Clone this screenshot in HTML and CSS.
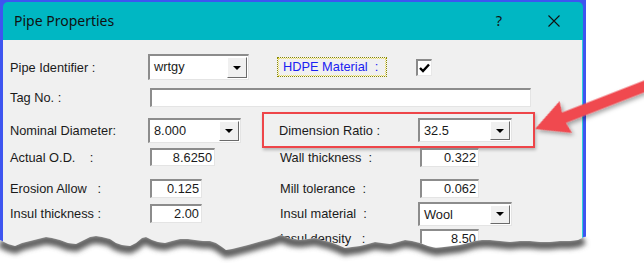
FILE: index.html
```html
<!DOCTYPE html>
<html lang="en">
<head>
    <meta charset="UTF-8">
    <title>Pipe Properties</title>
    <link rel="stylesheet" href="styles.css">
</head>
<body>
    <div class="window">
        <div class="titlebar">
            <span class="title">Pipe Properties</span>
            <span class="help">?</span>
            <svg class="close" width="12" height="12" viewBox="0 0 12 12">
                <path d="M0.5 0.5 L11.5 11.5 M11.5 0.5 L0.5 11.5" stroke="#111" stroke-width="1.1" fill="none"/>
            </svg>
        </div>
        <div class="content">
            <div class="row r1">
                <span class="lbl">Pipe Identifier :</span>
                <div class="combo w-id"><span class="val">wrtgy</span><span class="btn"><i class="tri"></i></span></div>
                <div class="right">
                    <span class="hdpe">HDPE Material&nbsp;&nbsp;:</span>
                    <span class="check">
                        <svg width="11" height="10" viewBox="0 0 11 10"><path d="M1 5 L4 8 L10 1.5" stroke="#000" stroke-width="2.4" fill="none"/></svg>
                    </span>
                </div>
            </div>
            <div class="row r2">
                <span class="lbl">Tag No. :</span>
                <div class="txt w-tag"></div>
            </div>
            <div class="row r3">
                <span class="lbl">Nominal Diameter:</span>
                <div class="combo w-nom"><span class="val">8.000</span><span class="btn"><i class="tri"></i></span></div>
                <div class="right boxed">
                    <span class="rlbl">Dimension Ratio :</span>
                    <div class="combo w-r"><span class="val">32.5</span><span class="btn"><i class="tri"></i></span></div>
                </div>
            </div>
            <div class="row r4">
                <span class="lbl">Actual O.D.&nbsp;&nbsp;&nbsp;&nbsp;:</span>
                <div class="txt num w-od">8.6250</div>
                <div class="right">
                    <span class="rlbl">Wall thickness&nbsp;&nbsp;:</span>
                    <div class="txt num w-rt">0.322</div>
                </div>
            </div>
            <div class="row r5">
                <span class="lbl">Erosion Allow&nbsp;&nbsp;&nbsp;:</span>
                <div class="txt num w-sm">0.125</div>
                <div class="right">
                    <span class="rlbl">Mill tolerance&nbsp;&nbsp;:</span>
                    <div class="txt num w-rt">0.062</div>
                </div>
            </div>
            <div class="row r6">
                <span class="lbl">Insul thickness :</span>
                <div class="txt num w-sm">2.00</div>
                <div class="right">
                    <span class="rlbl">Insul material&nbsp;&nbsp;:</span>
                    <div class="combo w-r"><span class="val">Wool</span><span class="btn"><i class="tri"></i></span></div>
                </div>
            </div>
            <div class="row r7">
                <span class="lbl"></span>
                <span></span>
                <div class="right">
                    <span class="rlbl">Insul density&nbsp;&nbsp;&nbsp;:</span>
                    <div class="txt num w-rt">8.50</div>
                </div>
            </div>
        </div>
    </div>

    <!-- callout arrow -->
    <svg class="arrow" width="644" height="263" viewBox="0 0 644 263">
        <defs>
            <filter id="ash" x="-20%" y="-20%" width="140%" height="160%">
                <feDropShadow dx="1" dy="3" stdDeviation="2" flood-color="#000" flood-opacity="0.35"/>
            </filter>
        </defs>
        <g transform="translate(535 129) rotate(-21.3)" filter="url(#ash)">
            <polygon points="0,0 33,-17 31,-5.5 120,-5.5 120,5.5 31,5.5 33,17" fill="#f0494f"/>
        </g>
    </svg>

    <!-- torn paper edge -->
    <svg class="torn" width="644" height="263" viewBox="0 0 644 263">
        <defs>
            <clipPath id="below">
                <polygon points="0,240 8,244 15,246 22,243 30,241 38,239 46,237 52,238 60,240 68,243 76,244 84,240 90,237 96,236 102,237 110,239 116,243 122,245 130,246 136,243 142,238 146,237 152,240 158,242 165,243 172,241 180,239 188,239 195,240 203,241 210,241 216,243 222,247 226,250 232,249 240,247 248,245 255,243 262,241 270,239 276,237 281,235 286,237 292,239 300,240 308,239 315,238 322,240 330,242 338,245 345,248 352,247 360,246 368,244 375,242 382,243 390,244 398,242 405,240 412,241 420,243 428,246 436,248 444,247 452,246 460,245 468,243 475,241 482,240 490,240 500,241 510,242 520,241 530,241 540,242 550,242 560,241 570,241 578,240 584,237 590,236 644,236 644,263 0,263"/>
            </clipPath>
            <filter id="soft" x="-5%" y="-200%" width="110%" height="500%">
                <feGaussianBlur stdDeviation="2.8"/>
            </filter>
        </defs>
        <rect x="0" y="220" width="644" height="43" fill="#fff" clip-path="url(#below)"/>
        <g clip-path="url(#below)">
            <polyline transform="translate(0 3)" filter="url(#soft)" fill="none" stroke="#5e5e5e" stroke-width="9"
                points="0,240 8,244 15,246 22,243 30,241 38,239 46,237 52,238 60,240 68,243 76,244 84,240 90,237 96,236 102,237 110,239 116,243 122,245 130,246 136,243 142,238 146,237 152,240 158,242 165,243 172,241 180,239 188,239 195,240 203,241 210,241 216,243 222,247 226,250 232,249 240,247 248,245 255,243 262,241 270,239 276,237 281,235 286,237 292,239 300,240 308,239 315,238 322,240 330,242 338,245 345,248 352,247 360,246 368,244 375,242 382,243 390,244 398,242 405,240 412,241 420,243 428,246 436,248 444,247 452,246 460,245 468,243 475,241 482,240 490,240 500,241 510,242 520,241 530,241 540,242 550,242 560,241 570,241 578,240 584,237"/>
        </g>
    </svg>
</body>
</html>
```

FILE: styles.css
```css
body {
    margin: 0;
    background: #fff;
    font-family: "Liberation Sans", Arial, sans-serif;
    font-size: 12.8px;
    color: #1a1a1a;
    width: 644px;
    height: 263px;
    overflow: hidden;
    position: relative;
}
.window {
    width: 580px;
    height: 261px;
    padding: 2px 3px 0 3px;
    background: #3e55f0;
}
.titlebar {
    height: 38px;
    background: #00b7c3;
    border-radius: 5px 5px 0 0;
    display: flex;
    align-items: center;
    font-family: "Noto Sans", "Open Sans", sans-serif;
    color: #111;
}
.title {
    font-size: 14px;
    margin-left: 11px;
    margin-top: -2px;
}
.help {
    font-size: 14.5px;
    margin-left: auto;
    margin-top: -2px;
}
.close {
    margin-left: 46px;
    margin-right: 23px;
}
.content {
    height: 223px;
    background: #f0f0f0;
    padding-top: 12px;
    box-sizing: border-box;
    box-shadow: inset -1px 0 0 #2fd0d8;
}
.row {
    display: grid;
    grid-template-columns: 138px 114px 1fr;
    align-items: center;
    padding-left: 7px;
}
.r1 { height: 30px; }
.r2 { height: 30px; }
.r3 { height: 34px; }
.r4 { height: 22px; }
.r5 { height: 26px; margin-top: 7px; }
.r6 { height: 25px; }
.r7 { height: 25px; }
.lbl { white-space: nowrap; }
.right {
    display: flex;
    align-items: center;
    padding-left: 18px;
    height: 100%;
}
.rlbl {
    width: 138px;
    white-space: nowrap;
}
.boxed {
    align-self: start;
    height: 36px;
    box-sizing: border-box;
    width: 273px;
    padding-left: 15px;
    border: 2px solid #ee4549;
    box-shadow: 1px 2px 3px rgba(0, 0, 0, 0.25);
}
.boxed .rlbl { width: 139px; }
.hdpe {
    color: #1a22f2;
    padding: 1px 5px;
    height: 16px;
    line-height: 16px;
    width: 98px;
    margin-left: -3px;
    border: 1px dotted #8a8a00;
    outline: 1px dotted #f0e060;
    outline-offset: -2px;
    white-space: nowrap;
}
.check {
    margin-left: 29px;
    width: 13px;
    height: 14px;
    background: #fff;
    border-style: solid;
    border-width: 2px 1px 1px 2px;
    border-color: #8a8a8a #e8e8e8 #e8e8e8 #8a8a8a;
    display: flex;
    align-items: center;
    justify-content: center;
}
.txt, .combo {
    background: #fff;
    border-style: solid;
    border-width: 2px 1px 1px 2px;
    border-color: #8c8c8c #e4e4e4 #e4e4e4 #8c8c8c;
    box-sizing: border-box;
    height: 19px;
    line-height: 16px;
    white-space: nowrap;
}
.txt { margin-left: 2px; }
.num {
    text-align: right;
    padding-right: 2px;
}
.combo {
    display: flex;
    align-items: stretch;
    height: 25px;
}
.combo .val {
    flex: 1;
    padding-left: 4px;
    line-height: 21px;
}
.btn {
    width: 18px;
    margin: 1px;
    background: #f0f0f0;
    border-style: solid;
    border-width: 1px;
    border-color: #fff #6a6a6a #6a6a6a #fff;
    display: flex;
    align-items: center;
    justify-content: center;
}
.tri {
    width: 0;
    height: 0;
    border-left: 4px solid transparent;
    border-right: 4px solid transparent;
    border-top: 4px solid #000;
}
.w-id { width: 101px; height: 26px; }
.w-nom { width: 93px; }
.w-r { width: 94px; height: 24px; }
.w-tag { width: 381px; grid-column: 2 / 4; }
.w-od { width: 65px; height: 18px; }
.w-sm { width: 52px; }
.w-rt { width: 59px; }
.arrow, .torn {
    position: absolute;
    left: 0;
    top: 0;
    pointer-events: none;
}
.arrow { z-index: 2; }
.torn { z-index: 1; }
```
